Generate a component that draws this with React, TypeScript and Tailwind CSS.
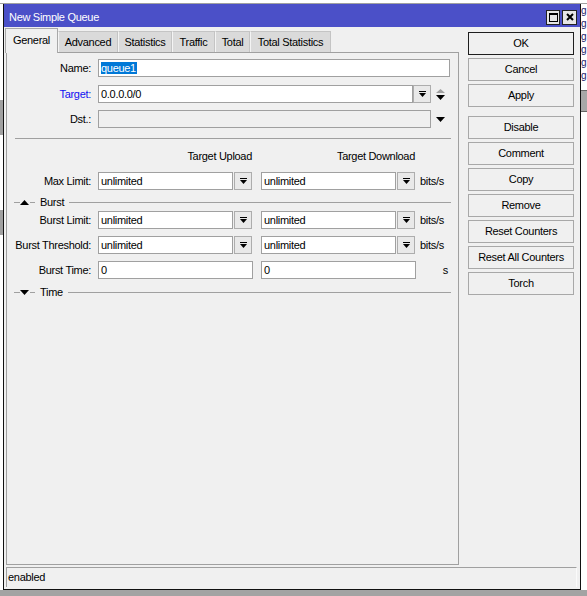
import type { ReactNode } from 'react';

const tabs = ['General', 'Advanced', 'Statistics', 'Traffic', 'Total', 'Total Statistics'];
const tabWidths = ['w-[53px]', 'w-[60px]', 'w-[54px]', 'w-[43px]', 'w-[35px]', 'w-[81px]'];

const actions = ['Disable', 'Comment', 'Copy', 'Remove', 'Reset Counters', 'Reset All Counters', 'Torch'];

function DropIcon() {
  return (
    <svg width="7" height="7" viewBox="0 0 7 7" shapeRendering="crispEdges">
      <rect x="0" y="0" width="7" height="1" fill="#000" />
      <polygon points="0,2 7,2 3.5,6" fill="#000" shapeRendering="auto" />
    </svg>
  );
}

function DownTriangle({ color = '#000' }: { color?: string }) {
  return (
    <svg width="9" height="5" viewBox="0 0 9 5">
      <polygon points="0,0 9,0 4.5,5" fill={color} />
    </svg>
  );
}

function UpTriangle({ color = '#000' }: { color?: string }) {
  return (
    <svg width="9" height="5" viewBox="0 0 9 5">
      <polygon points="0,5 9,5 4.5,0" fill={color} />
    </svg>
  );
}

function Label({ children, blue }: { children: ReactNode; blue?: boolean }) {
  return (
    <div className={`w-[84px] mr-[7px] shrink-0 text-right ${blue ? 'text-[#1010f0]' : 'text-black'}`}>
      {children}
    </div>
  );
}

function Input({ width, children, disabled }: { width: string; children?: ReactNode; disabled?: boolean }) {
  return (
    <div
      className={`${width} h-[18px] shrink-0 border border-[#a0a0a0] flex items-center pl-[2px] ${
        disabled ? 'bg-[#f0f0f0]' : 'bg-white'
      }`}
    >
      {children}
    </div>
  );
}

function DropButton() {
  return (
    <div className="w-[18px] h-[18px] shrink-0 border border-[#adadad] bg-[#e9e9e9] flex items-center justify-center">
      <DropIcon />
    </div>
  );
}

function LimitRow({ label, className }: { label: string; className: string }) {
  return (
    <div className={`flex items-center h-[18px] ${className}`}>
      <Label>{label}</Label>
      <Input width="w-[135px]">unlimited</Input>
      <div className="ml-px">
        <DropButton />
      </div>
      <div className="ml-[9px]">
        <Input width="w-[135px]">unlimited</Input>
      </div>
      <div className="ml-px">
        <DropButton />
      </div>
      <div className="ml-[5px] w-[28px]">bits/s</div>
    </div>
  );
}

function Section({ title, open, className }: { title: string; open?: boolean; className: string }) {
  return (
    <div className={`flex items-center h-[12px] ml-[7px] mr-[7px] ${className}`}>
      <div className="w-[6px] h-px bg-[#a0a0a0]" />
      {open ? <UpTriangle /> : <DownTriangle />}
      <div className="ml-px w-[5px] h-px bg-[#a0a0a0]" />
      <div className="ml-[5px]">{title}</div>
      <div className="ml-[5px] flex-1 h-px bg-[#a0a0a0]" />
    </div>
  );
}

function SideButton({ children, primary, className = '' }: { children: ReactNode; primary?: boolean; className?: string }) {
  return (
    <div
      className={`w-[106px] h-[23px] flex items-center justify-center bg-[#f0f0f0] border ${
        primary ? 'border-[#1e1e1e]' : 'border-[#a8a8a8]'
      } ${className}`}
    >
      {children}
    </div>
  );
}

function Window() {
  return (
    <div className="w-[578px] h-full shrink-0 border-x border-b border-[#111] bg-[#f0f0f0] flex flex-col">
      {/* title bar */}
      <div className="h-[23px] shrink-0 bg-[#4b50c8] flex items-center pl-[5px] pr-[3px]">
        <div className="text-white text-[11px] pt-[3px]">New Simple Queue</div>
        <div className="ml-auto flex gap-[2px] mt-[3px]">
          <div className="w-[14px] h-[15px] border border-[#222] bg-[#e6e6e6] flex items-center justify-center">
            <svg width="9" height="9" viewBox="0 0 9 9" shapeRendering="crispEdges">
              <rect x="0.5" y="0.5" width="8" height="8" fill="none" stroke="#000" />
              <rect x="0" y="0" width="9" height="2" fill="#000" />
            </svg>
          </div>
          <div className="w-[15px] h-[15px] border border-[#222] bg-[#e6e6e6] flex items-center justify-center">
            <svg width="8" height="8" viewBox="0 0 8 8">
              <path d="M1 1 L7 7 M7 1 L1 7" stroke="#000" strokeWidth="2" />
            </svg>
          </div>
        </div>
      </div>

      <div className="flex px-[2px] flex-1">
        {/* tabs and form */}
        <div className="w-[453px] pt-px flex flex-col">
          <div className="flex items-end h-[24px] -ml-px">
            {tabs.map((t, i) =>
              i === 0 ? (
                <div
                  key={t}
                  className={`${tabWidths[i]} h-[25px] -mb-px relative z-10 bg-[#f0f0f0] border-x border-t border-[#a8a8a8] flex items-center justify-center pb-[2px]`}
                >
                  {t}
                </div>
              ) : (
                <div
                  key={t}
                  className={`${tabWidths[i]} h-[21px] bg-[#dadada] border-t border-r border-[#c4c4c4] border-l border-l-[#f4f4f4] flex items-center justify-center pt-px`}
                >
                  {t}
                </div>
              )
            )}
          </div>

          <div className="h-[513px] border border-[#a0a0a0] flex flex-col">
            <div className="flex items-center h-[18px] mt-[6px]">
              <Label>Name:</Label>
              <Input width="w-[352px]">
                <span className="bg-[#0078d7] text-white leading-[12px] pr-px">queue1</span>
              </Input>
            </div>

            <div className="flex items-center h-[18px] mt-[8px]">
              <Label blue>Target:</Label>
              <Input width="w-[315px]">0.0.0.0/0</Input>
              <DropButton />
              <div className="ml-[5px] flex flex-col gap-[2px]">
                <svg width="9" height="4" viewBox="0 0 9 4">
                  <polygon points="0,4 9,4 4.5,0" fill="#a0a0a0" />
                </svg>
                <DownTriangle />
              </div>
            </div>

            <div className="flex items-center h-[18px] mt-[7px]">
              <Label>Dst.:</Label>
              <Input width="w-[333px]" disabled />
              <div className="ml-[5px] pt-px">
                <DownTriangle />
              </div>
            </div>

            <div className="h-px bg-[#a0a0a0] ml-[8px] mr-[7px] mt-[10px]" />

            <div className="flex items-center h-[14px] mt-[10px]">
              <div className="w-[91px]" />
              <div className="w-[154px] text-right">Target Upload</div>
              <div className="ml-[9px] w-[154px] text-right">Target Download</div>
            </div>

            <LimitRow label="Max Limit:" className="mt-[9px]" />

            <Section title="Burst" open className="mt-[6px]" />

            <LimitRow label="Burst Limit:" className="mt-[3px]" />
            <LimitRow label="Burst Threshold:" className="mt-[7px]" />

            <div className="flex items-center h-[18px] mt-[7px]">
              <Label>Burst Time:</Label>
              <Input width="w-[155px]">0</Input>
              <div className="ml-[8px]">
                <Input width="w-[155px]">0</Input>
              </div>
              <div className="ml-[4px] w-[28px] text-right">s</div>
            </div>

            <Section title="Time" className="mt-[7px]" />
          </div>
        </div>

        {/* dialog buttons */}
        <div className="ml-[9px] mt-[5px] flex flex-col">
          <div className="flex flex-col gap-[3px]">
            <SideButton primary>OK</SideButton>
            <SideButton>Cancel</SideButton>
            <SideButton>Apply</SideButton>
          </div>
          <div className="flex flex-col gap-[3px] mt-[9px]">
            {actions.map((a) => (
              <SideButton key={a}>{a}</SideButton>
            ))}
          </div>
        </div>
      </div>

      {/* status bar */}
      <div className="ml-[2px] mt-[2px] mb-[2px] w-[571px] h-[20px] shrink-0 border-t border-l border-[#a0a0a0] border-r border-r-[#fafafa] flex items-center pl-px">
        enabled
      </div>
    </div>
  );
}

export default function App() {
  return (
    <div className="w-[587px] h-[596px] overflow-hidden bg-white flex flex-col font-['Liberation_Sans',Arial,sans-serif] text-[11px] tracking-[-0.3px] leading-none text-black">
      <div className="h-[4px] shrink-0 border-b border-[#a0a0a0]" />
      <div className="flex h-[586px] shrink-0">
        <div className="w-[3px] shrink-0 flex flex-col">
          <div className="h-[96px]" />
          <div className="h-[35px] bg-[#a0a0a0]" />
          <div className="h-[75px]" />
          <div className="h-[25px] bg-[#a0a0a0]" />
        </div>
        <Window />
        {/* neighbouring list peeking out on the right */}
        <div className="w-[6px] shrink-0 flex flex-col text-[#1c1c6e] text-[10px] tracking-normal">
          {[0, 1, 2, 3, 4, 5].map((i) => (
            <div key={i} className="h-[13px] leading-[13px]">
              g
            </div>
          ))}
          <div className="mt-[8px] h-[22px] bg-[#a8a8a8] border-y border-[#666]" />
        </div>
      </div>
      <div className="flex-1 bg-[#a3a3a3]" />
    </div>
  );
}
